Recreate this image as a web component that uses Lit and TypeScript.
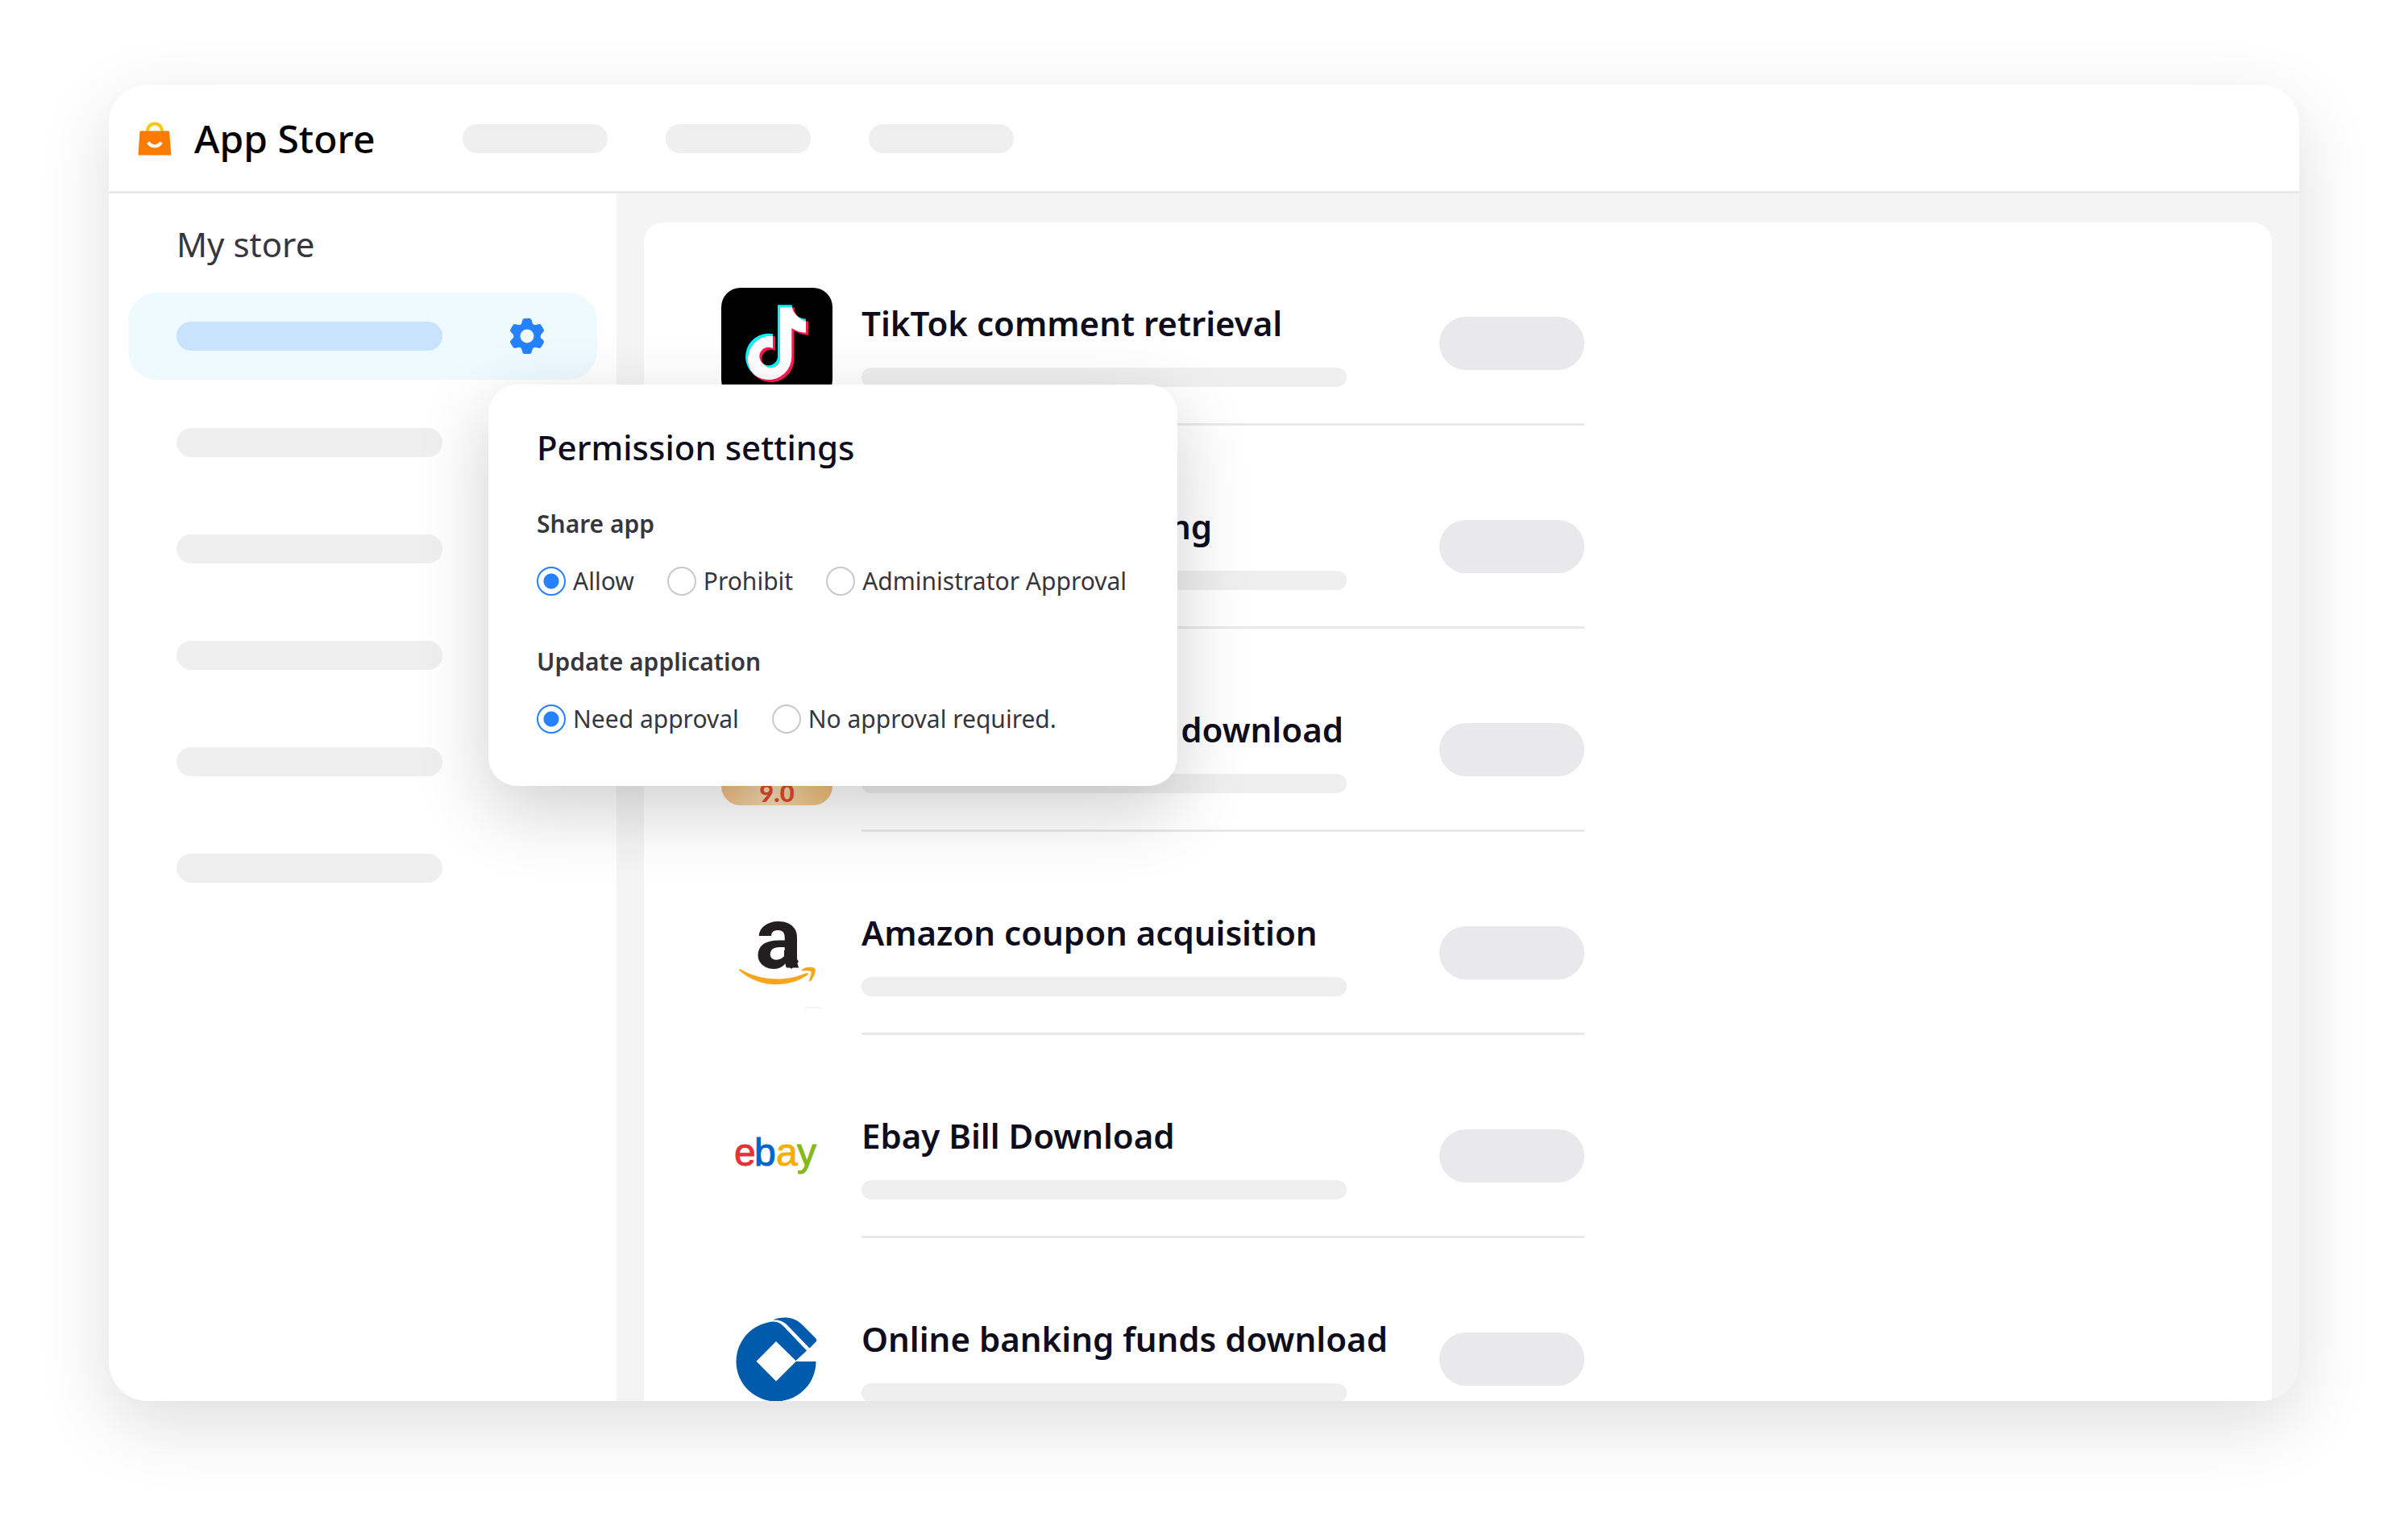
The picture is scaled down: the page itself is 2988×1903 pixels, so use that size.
import { LitElement, html, svg, css, nothing, TemplateResult } from "lit";
import { customElement, property, state } from "lit/decorators.js";
import { classMap } from "lit/directives/class-map.js";
import { styleMap } from "lit/directives/style-map.js";

interface StoreApp {
  title: string;
  icon: TemplateResult | typeof nothing;
  /** Reserved title width; the text sits at its trailing edge. */
  titleWidth?: number;
}

interface Choice {
  value: string;
  label: string;
}

const tiktokNote =
  "M285 115H338A52 52 0 0 0 390 167V218A95 95 0 0 1 337 201V307A86 86 0 1 1 267 223V276A34 34 0 1 0 285 307Z";

const tiktokIcon = html`
  <svg class="logo" viewBox="75 51 414 414" aria-hidden="true">
    <defs>
      <clipPath id="note"><path d=${tiktokNote} /></clipPath>
    </defs>
    <rect x="75" y="51" width="414" height="414" rx="72" fill="#000" />
    <path d=${tiktokNote} fill="#00f7ff" />
    <path d=${tiktokNote} transform="translate(9 9)" fill="#ff1753" />
    <g clip-path="url(#note)">
      <path d=${tiktokNote} transform="translate(9 9)" fill="#fff" />
    </g>
  </svg>
`;

const goldIcon = html`
  <svg class="logo" viewBox="0 0 138 138" aria-hidden="true">
    <defs>
      <linearGradient id="gold" x1="0" y1="0" x2="1" y2="0">
        <stop offset="0" stop-color="#efbd83" />
        <stop offset="0.45" stop-color="#f6dcb2" />
        <stop offset="1" stop-color="#ecbd74" />
      </linearGradient>
    </defs>
    <rect width="138" height="138" rx="24" fill="url(#gold)" />
    <text class="gold-text" x="69" y="134" text-anchor="middle">9.0</text>
  </svg>
`;

const amazonIcon = html`
  <svg class="logo" viewBox="0 0 138 138" aria-hidden="true">
    <text class="amazon-text" x="42" y="88">a</text>
    <path d="M78 80L87 89L96 80L91.500 73V66H78Z" fill="#231f20" />
    <path
      d="M22 90.500Q21.500 88.500 24 89.500C48 103 78 106 105.500 94Q109.500 93.500 107 96.500C82 114 45 112 22 90.500Z"
      fill="#f8a51b"
    />
    <path
      d="M99 91C103 86 113 86 116.500 88.500C117.500 93 114 101 110.500 104.500Q108.500 105 109.500 101.500C111 97 112.500 93.500 111 92C108 90.500 103 91.500 99 91Z"
      fill="#f8a51b"
    />
    <path d="M104 137H124" stroke="#e6e6e6" stroke-width="1" />
  </svg>
`;

const ebayIcon = html`
  <svg class="logo ebay-text" viewBox="0 0 138 138" aria-hidden="true">
    <text x="16" y="81" fill="#e53238" stroke="#e53238">e</text>
    <text x="41" y="81" fill="#0064d2" stroke="#0064d2">b</text>
    <text x="68" y="81" fill="#f5af02" stroke="#f5af02">a</text>
    <text x="94" y="81" fill="#86b817" stroke="#86b817">y</text>
  </svg>
`;

const bankIcon = html`
  <svg class="logo" viewBox="0 0 138 138" aria-hidden="true">
    <g fill="#005bac">
      <path
        d="M117.500 72A49.500 49.500 0 1 1 58 23.500Q64 22 69 23Q73 24 77 28L106 58.500L92.500 71L68 47L43.500 71.700L68 96.500L92.700 72Z"
      />
      <path
        d="M64 20.500C74 16 90 15.500 100 26L117 43Q119.500 46 117 48L109.500 55.500L83 28C77 21.500 72 20 64 20.500Z"
      />
    </g>
  </svg>
`;

const bagIcon = html`
  <svg class="bag" viewBox="0 0 42 42" aria-hidden="true">
    <path d="M12 14V11.500A9 9 0 0 1 30 11.500V14" fill="none" stroke="#ffc60f" stroke-width="4" />
    <path d="M3.500 11.500H38Q39 11.500 39.100 12.500L41.500 41.500H0.500L2.500 12.500Q2.600 11.500 3.500 11.500Z" fill="#fb7a00" />
    <path d="M13 25.500A9 9 0 0 0 29 25.500" fill="none" stroke="#fff" stroke-width="4" />
  </svg>
`;

const tooth = (angle: number) =>
  svg`<path d="M-9 -13Q-6.500 -15 -6 -18.500Q-5.500 -22 -3 -22H3Q5.500 -22 6 -18.500Q6.500 -15 9 -13Z" transform="rotate(${angle})" />`;

const gearIcon = html`
  <svg class="gear" viewBox="-24 -24 48 48" aria-hidden="true">
    <g fill="#2681ff">
      <circle r="16.500" />
      ${[0, 60, 120, 180, 240, 300].map(tooth)}
    </g>
    <circle r="8.500" fill="#f0fafe" />
  </svg>
`;

const apps: StoreApp[] = [
  { title: "TikTok comment retrieval", icon: tiktokIcon },
  { title: "ng", icon: nothing, titleWidth: 435 },
  { title: "download", icon: goldIcon, titleWidth: 598 },
  { title: "Amazon coupon acquisition", icon: amazonIcon },
  { title: "Ebay Bill Download", icon: ebayIcon },
  { title: "Online banking funds download", icon: bankIcon },
];

const shareChoices: Choice[] = [
  { value: "allow", label: "Allow" },
  { value: "prohibit", label: "Prohibit" },
  { value: "admin", label: "Administrator Approval" },
];

const updateChoices: Choice[] = [
  { value: "need", label: "Need approval" },
  { value: "none", label: "No approval required." },
];

@customElement("permission-popover")
export class PermissionPopover extends LitElement {
  @state() private shareRule = "allow";
  @state() private updateRule = "need";

  static styles = css`
    :host {
      display: block;
      box-sizing: border-box;
      padding: 48px 60px;
      background: #fff;
      border-radius: 36px;
      box-shadow: 0 30px 90px rgba(0, 0, 0, 0.19);
      white-space: nowrap;
      color: #37363d;
    }
    .title {
      margin: 0;
      font-size: 42px;
      line-height: 60px;
      font-weight: 500;
      color: #0f0c1c;
    }
    .group {
      margin: 0;
      padding: 0;
      border: 0;
      min-width: 0;
      font-size: 30px;
      line-height: 42px;
    }
    .group + .group {
      margin-top: 58px;
    }
    .first {
      margin-top: 44px;
    }
    .legend {
      padding: 0;
      font-weight: 600;
    }
    .choices {
      display: flex;
      gap: 41px;
      padding-top: 29px;
    }
    .choice {
      display: flex;
      align-items: center;
      gap: 9px;
      height: 42px;
    }
    .radio {
      appearance: none;
      box-sizing: border-box;
      flex: none;
      width: 36px;
      height: 36px;
      margin: 0;
      border: 2px solid #c9c8cc;
      border-radius: 50%;
      background: #fff;
    }
    .radio:checked {
      border-color: #2681ff;
      background: radial-gradient(circle, #2681ff 9px, #fff 10px);
    }
  `;

  private choices(name: string, list: Choice[], current: string, pick: (value: string) => void) {
    return html`
      <div class="choices">
        ${list.map(
          (c) => html`
            <label class="choice">
              <input
                class="radio"
                type="radio"
                name=${name}
                value=${c.value}
                .checked=${c.value === current}
                @change=${() => pick(c.value)}
              />
              <span>${c.label}</span>
            </label>
          `,
        )}
      </div>
    `;
  }

  render() {
    return html`
      <h2 class="title">Permission settings</h2>
      <fieldset class="group first">
        <legend class="legend">Share app</legend>
        ${this.choices("share", shareChoices, this.shareRule, (v) => (this.shareRule = v))}
      </fieldset>
      <fieldset class="group">
        <legend class="legend">Update application</legend>
        ${this.choices("update", updateChoices, this.updateRule, (v) => (this.updateRule = v))}
      </fieldset>
    `;
  }
}

@customElement("app-row")
export class AppRow extends LitElement {
  @property({ attribute: false }) app!: StoreApp;

  static styles = css`
    :host {
      display: flex;
      gap: 36px;
      padding-top: 81px;
    }
    .icon {
      flex: none;
      width: 138px;
      height: 138px;
    }
    .logo {
      display: block;
      width: 138px;
      height: 138px;
      overflow: visible;
    }
    .gold-text {
      font: 900 31px Lato, sans-serif;
      fill: #e0492f;
    }
    .amazon-text {
      font: bold 108px Roboto, sans-serif;
      fill: #231f20;
    }
    .ebay-text {
      font: 48px "Liberation Sans", sans-serif;
      stroke-width: 1px;
    }
    .body {
      flex: 1;
      display: flex;
      justify-content: space-between;
      height: 168px;
      border-bottom: 3px solid #e9e9e9;
    }
    .text {
      padding-top: 14px;
    }
    .title {
      margin: 0 0 25px;
      font-size: 42px;
      line-height: 60px;
      font-weight: 600;
      color: #0f0c1c;
      white-space: nowrap;
    }
    .tail {
      text-align: right;
    }
    .bar {
      width: 602px;
      height: 24px;
      border-radius: 12px;
      background: #efefef;
    }
    .action {
      width: 180px;
      height: 66px;
      margin: 36px 0 0;
      padding: 0;
      border: 0;
      border-radius: 33px;
      background: #e9e8eb;
    }
  `;

  render() {
    const { title, icon, titleWidth } = this.app;
    return html`
      <div class="icon">${icon}</div>
      <div class="body">
        <div class="text">
          <h3
            class=${classMap({ title: true, tail: !!titleWidth })}
            style=${styleMap(titleWidth ? { width: `${titleWidth}px` } : {})}
          >${title}</h3>
          <div class="bar"></div>
        </div>
        <button class="action" type="button" aria-label=${title}></button>
      </div>
    `;
  }
}

@customElement("app-root")
export class AppRoot extends LitElement {
  static styles = css`
    :host {
      display: block;
      box-sizing: border-box;
      height: 100vh;
      padding: 105px 135px 165px;
      background: #fff;
      font-family: "Noto Sans", "Open Sans", sans-serif;
    }
    .window {
      display: flex;
      flex-direction: column;
      height: 100%;
      overflow: hidden;
      border-radius: 48px;
      background: #fff;
      box-shadow: 0 28px 90px rgba(0, 0, 0, 0.135);
    }
    .header {
      flex: none;
      display: flex;
      align-items: center;
      height: 130px;
      padding: 2px 36px 0;
      border-bottom: 3px solid #e9e9e9;
    }
    .bag {
      width: 42px;
      height: 42px;
      margin-right: 28px;
    }
    .brand {
      margin: 0 109px 0 0;
      font-size: 48px;
      line-height: 66px;
      font-weight: 500;
      color: #000;
    }
    .nav {
      display: flex;
      gap: 72px;
    }
    .pill {
      width: 180px;
      height: 36px;
      border-radius: 18px;
      background: #efefef;
    }
    .content {
      flex: 1;
      display: flex;
      min-height: 0;
    }
    .sidebar {
      position: relative;
      z-index: 1;
      flex: none;
      box-sizing: border-box;
      width: 630px;
      padding: 33px 24px 0;
    }
    .heading {
      margin: 0 0 30px 60px;
      font-size: 42px;
      line-height: 60px;
      font-weight: 400;
      color: #37363d;
    }
    .stores {
      display: flex;
      flex-direction: column;
      gap: 24px;
      margin: 0;
      padding: 0;
      list-style: none;
    }
    .store {
      display: flex;
      align-items: center;
      justify-content: space-between;
      height: 108px;
      padding: 0 63px 0 60px;
      border-radius: 36px;
    }
    .store .pill {
      width: 330px;
    }
    .active {
      position: relative;
      background: #effaff;
    }
    .active .pill {
      background: #c8e2ff;
    }
    .settings {
      width: 48px;
      height: 48px;
      padding: 0;
      border: 0;
      background: none;
    }
    .gear {
      display: block;
      width: 48px;
      height: 48px;
    }
    .popover {
      position: absolute;
      top: 114px;
      left: 447px;
      width: 855px;
      height: 498px;
    }
    .main {
      flex: 1;
      min-width: 0;
      padding: 36px 34px 0;
      background: #f4f4f4;
    }
    .panel {
      box-sizing: border-box;
      height: 100%;
      padding: 0 96px;
      border-radius: 24px 24px 0 0;
      background: #fff;
    }
    .apps {
      max-width: 1071px;
      margin: 0;
      padding: 0;
      list-style: none;
    }
  `;

  render() {
    return html`
      <div class="window">
        <header class="header">
          ${bagIcon}
          <h1 class="brand">App Store</h1>
          <div class="nav">${[0, 1, 2].map(() => html`<div class="pill"></div>`)}</div>
        </header>
        <div class="content">
          <aside class="sidebar">
            <h2 class="heading">My store</h2>
            <ul class="stores">
              <li class="store active">
                <div class="pill"></div>
                <button class="settings" type="button" aria-label="Permission settings">${gearIcon}</button>
                <permission-popover class="popover"></permission-popover>
              </li>
              ${[1, 2, 3, 4, 5].map(() => html`<li class="store"><div class="pill"></div></li>`)}
            </ul>
          </aside>
          <main class="main">
            <section class="panel">
              <ul class="apps">
                ${apps.map((app) => html`<li><app-row .app=${app}></app-row></li>`)}
              </ul>
            </section>
          </main>
        </div>
      </div>
    `;
  }
}
